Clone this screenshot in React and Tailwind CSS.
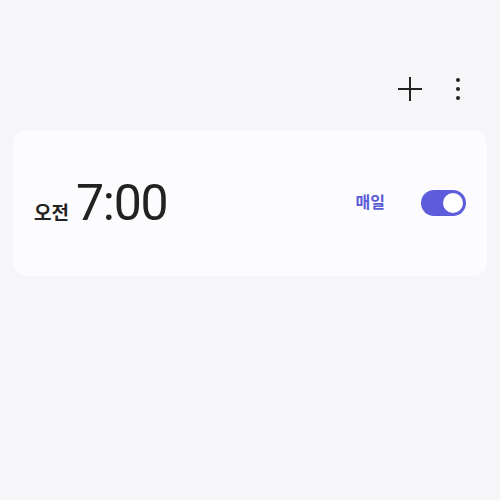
export default function App() {
  return (
    <div className="h-[500px] w-[500px] bg-[#f6f6f8] font-['Roboto','Noto_Sans_CJK_KR',sans-serif] text-[#222]">
      <div className="flex h-[130px] items-center justify-end gap-[34px] pr-[40px] pt-[48px]">
        <svg width="24" height="24" viewBox="0 0 24 24" className="text-[#222]">
          <path d="M12 0v24M0 12h24" stroke="currentColor" strokeWidth="2" />
        </svg>
        <div className="flex flex-col items-center gap-[5px]">
          <span className="h-[4px] w-[4px] rounded-full bg-[#222]" />
          <span className="h-[4px] w-[4px] rounded-full bg-[#222]" />
          <span className="h-[4px] w-[4px] rounded-full bg-[#222]" />
        </div>
      </div>
      <div className="mx-[13px] flex h-[146px] items-center rounded-[14px] bg-[#fcfcfe] pl-[21px] pr-[21px]">
        <div className="flex items-baseline gap-[7px]">
          <span className="text-[19px] font-bold">오전</span>
          <span className="text-[50px] font-normal leading-none tracking-tight">7:00</span>
        </div>
        <div className="ml-auto flex items-center gap-[36px]">
          <span className="text-[16px] font-bold text-[#5b5bd6]">매일</span>
          <div className="flex h-[26px] w-[45px] items-center justify-end rounded-full bg-[#5d5ddb] pr-[3px]">
            <span className="h-[20px] w-[20px] rounded-full bg-white" />
          </div>
        </div>
      </div>
    </div>
  );
}
